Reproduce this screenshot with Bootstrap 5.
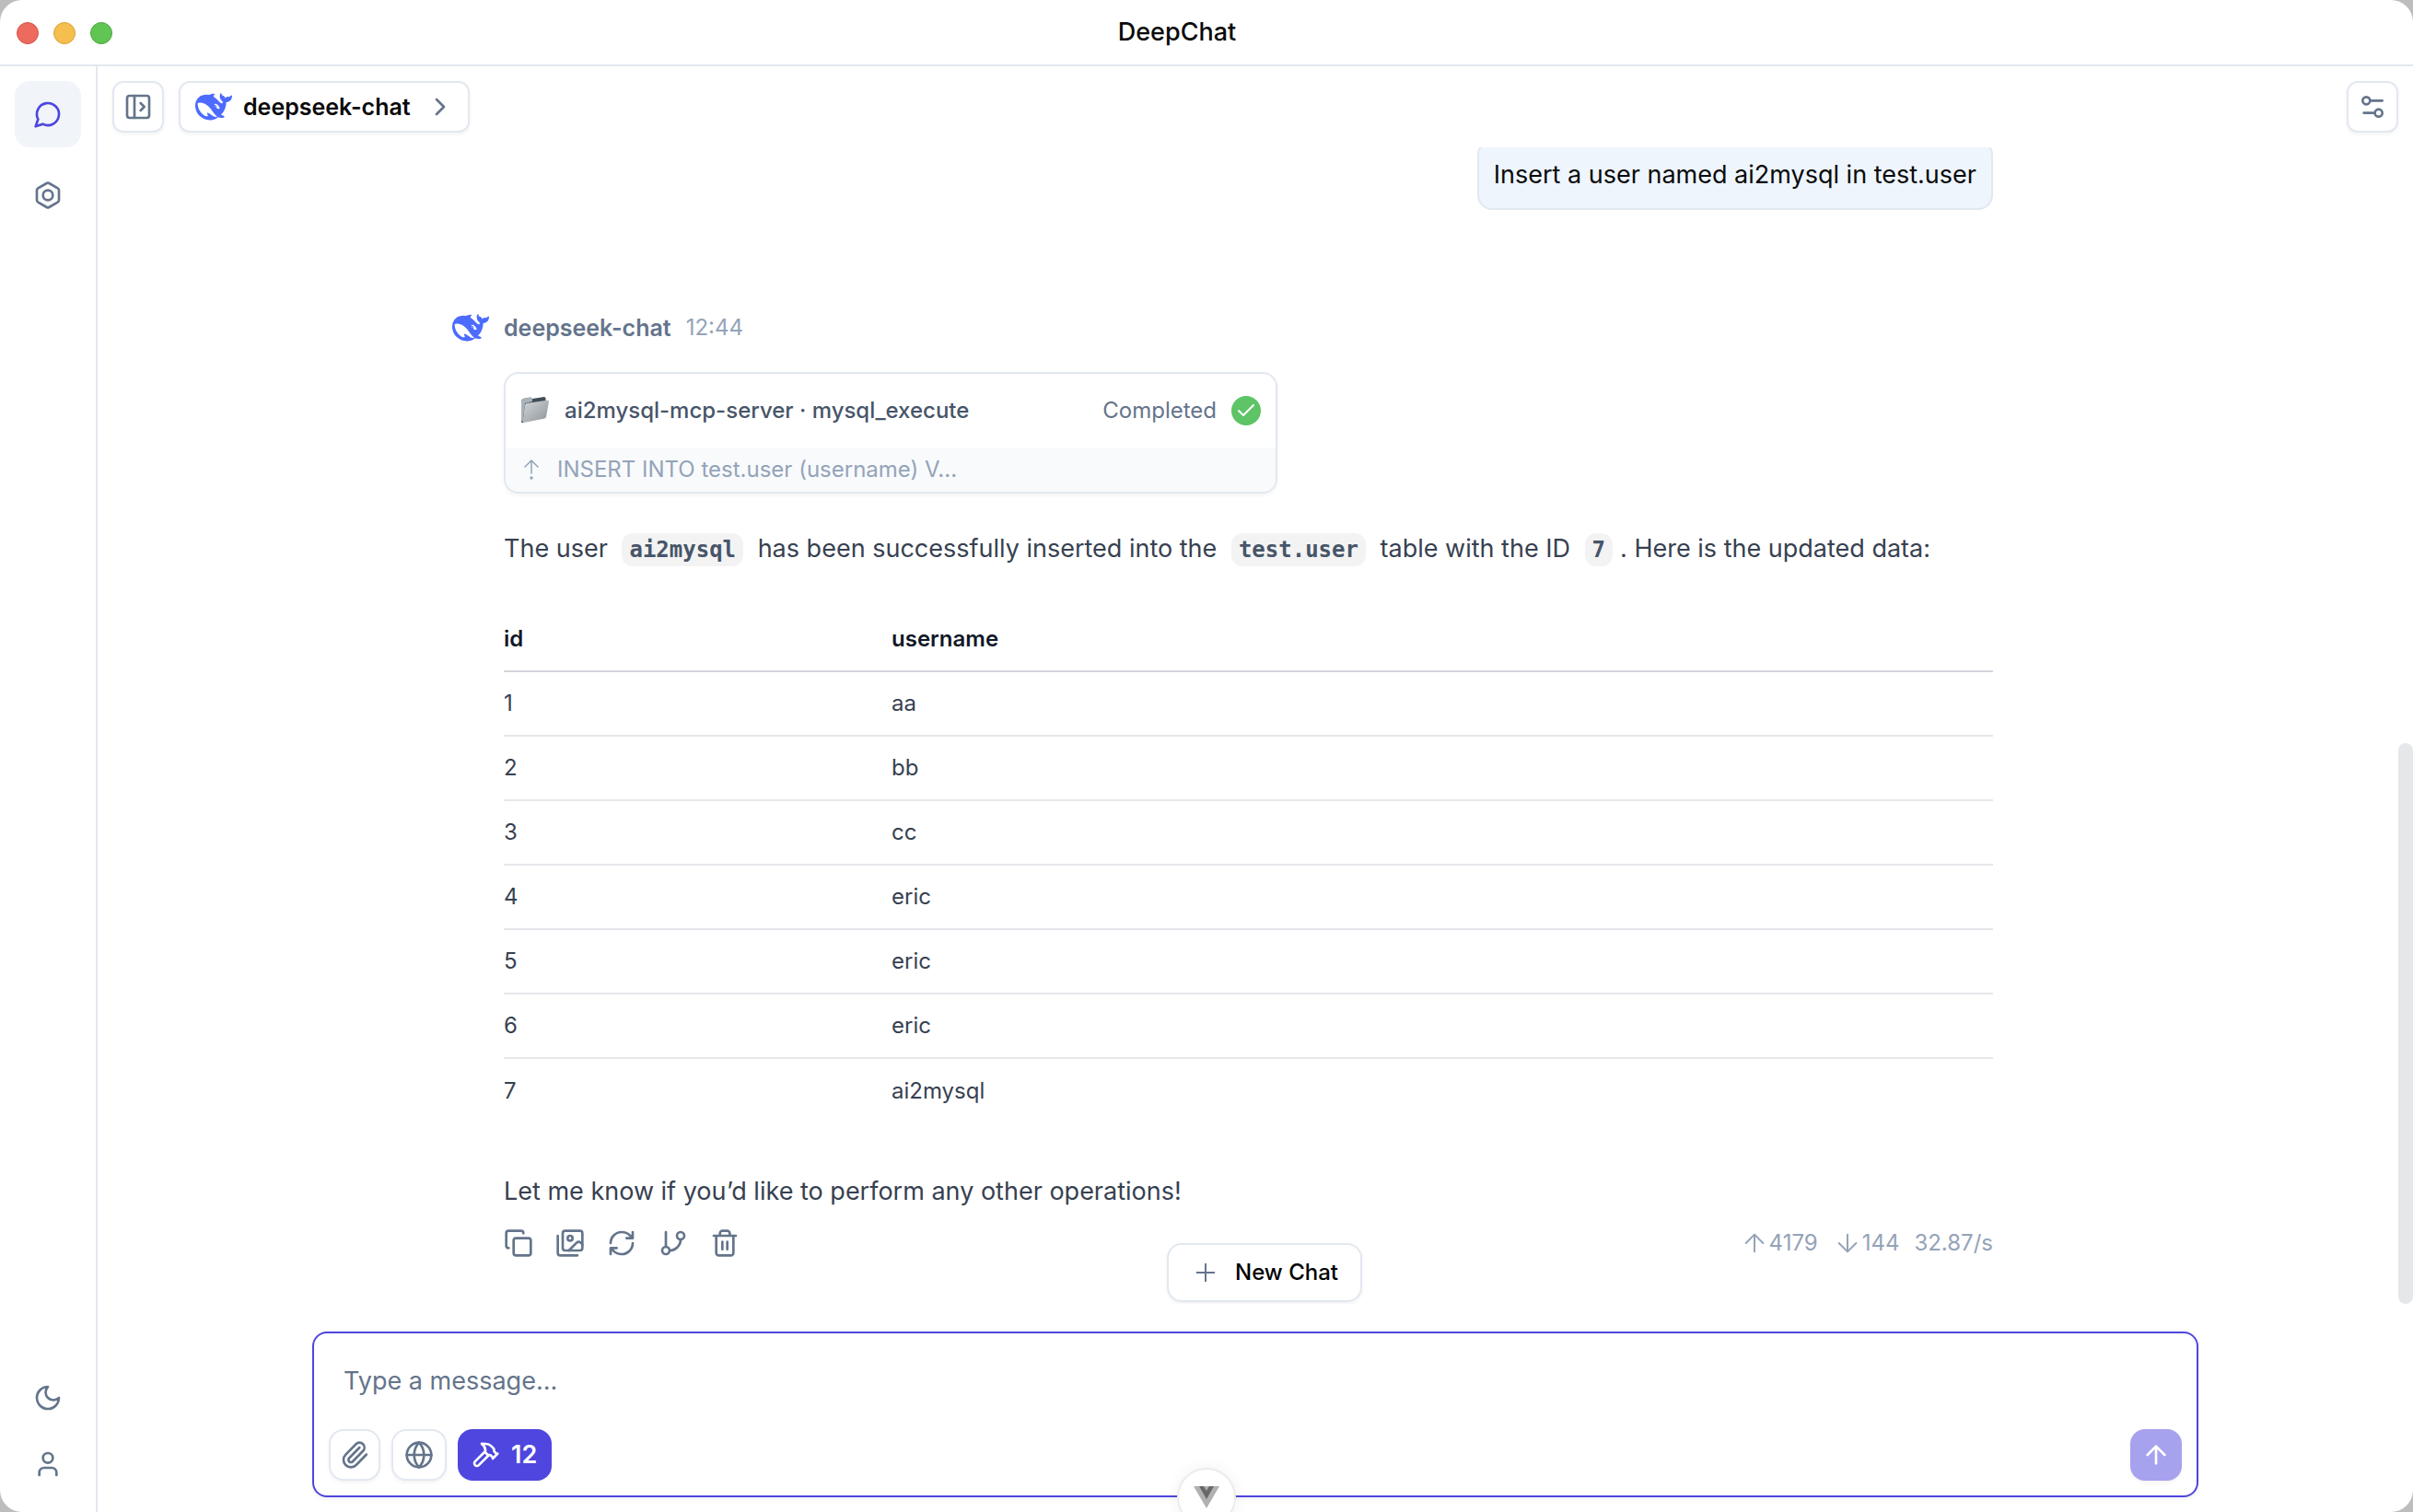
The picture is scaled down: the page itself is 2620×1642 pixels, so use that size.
<!DOCTYPE html>
<html lang="en">
<head>
<meta charset="utf-8">
<meta name="viewport" content="width=device-width, initial-scale=1">
<title>DeepChat</title>
<link href="https://cdn.jsdelivr.net/npm/bootstrap@5.3.0/dist/css/bootstrap.min.css" rel="stylesheet">
<style>
:root{--line:#e2e8f0;--muted:#64748b;--faint:#94a3b8;--accent:#4e46de;--prose:#374151}
html,body{height:100%}
body{background:#bdbdbd;font-family:Inter,"Liberation Sans",sans-serif;font-size:27px;line-height:40px;color:#0a0a0a;overflow:hidden}
button,textarea{font-family:inherit}
.window{height:100vh;border-radius:24px;background:#fff;overflow:hidden}
.titlebar{height:72px;border-bottom:2px solid var(--line);padding-right:64px}
.titlebar h1{font-size:27px;line-height:40px;font-weight:500}
.lights{left:18px;top:24px;gap:16px}
.light{width:24px;height:24px;border-radius:50%;border:1px solid}
.light.red{background:#ec6a5e;border-color:#d5544a}
.light.amber{background:#f4bf4f;border-color:#d8a03a}
.light.green{background:#61c554;border-color:#4aa63c}
.body-row,.feed{min-height:0}
.pane{min-width:0}
.rail{width:106px;border-right:2px solid var(--line);padding:16px}
.rail button{width:72px;height:72px;border:0;border-radius:16px;background:none;color:var(--muted)}
.rail button.current{background:#f1f5f9;color:var(--accent)}
svg.ico{width:32px;height:32px;flex:none;display:block;fill:none;stroke:currentColor;stroke-width:2;stroke-linecap:round;stroke-linejoin:round}
svg.ico.thin{stroke-width:1.5}
svg.ico.ico-sm{width:24px;height:24px}
svg.whale{width:40px;height:40px;flex:none;display:block;fill:#4d6bfe}
.boxed{height:56px;min-width:56px;padding:0;border:2px solid var(--line);border-radius:12px;background:#fff;color:var(--muted);box-shadow:0 2px 4px rgba(0,0,0,.05)}
.model{padding:0 14px 0 16px;font-size:25px;font-weight:600}
.model span{color:#0a0a0a}
.column-wide{width:100%;max-width:2048px}
.thread{padding:0 223px 46px 152px}
.bubble{border:2px solid var(--line);border-radius:16px;background:#eef5fd;padding:14px 16px;line-height:44px}
.reply-head{margin-top:108px;gap:16px}
.author{font-size:25px;font-weight:600;color:var(--muted)}
.clock{font-size:24px;color:var(--faint)}
.reply{padding-left:56px;color:var(--prose)}
.tool{width:840px;max-width:100%;margin-top:28px;border:2px solid var(--line);border-radius:16px;overflow:hidden;box-shadow:0 2px 4px rgba(0,0,0,.05);font-size:24px}
.tool-head{height:80px;padding:0 16px;color:#475569;font-weight:500}
.tool-head .state{color:var(--muted);font-weight:400}
.tool-call{height:48px;padding:0 16px;background:#f8fafc;color:var(--faint)}
.answer{margin:38px 0 0;line-height:44px}
.answer.closing{margin-top:53px}
.answer code{font-family:"DejaVu Sans Mono",monospace;font-size:24px;font-weight:700;color:#475569;background:#f3f3f3;border-radius:12px;padding:4px 8px;margin:0 8px}
.rows{margin:40px 0 0;font-size:24px;color:var(--prose);width:100%}
.rows th,.rows td{height:70px;padding:0;vertical-align:middle;line-height:40px;border-bottom:2px solid #e5e7eb}
.rows th{font-weight:600;color:#111827;border-bottom-color:#d1d5db}
.rows th:first-child{width:421px}
.rows tbody tr:last-child td{border-bottom:0}
.actions{margin-top:14px}
.tools{gap:24px}
.tools button{padding:0;border:0;background:none;color:var(--muted)}
.stats{font-size:24px;color:var(--faint);gap:16px}
.newchat{height:64px;border-radius:16px;padding:0 24px;gap:16px;font-size:24px;font-weight:500;margin-bottom:2px}
.floating{bottom:0;left:20px;right:0}
.thumb{right:0;bottom:0;width:16px;height:48.5%;border-radius:8px;background:#e5e7eb}
.composer{border:2px solid var(--accent);border-radius:16px;padding:16px;box-shadow:0 2px 4px rgba(0,0,0,.06)}
.composer textarea{height:88px;padding:16px;border:0;resize:none;outline:0;font-size:27px;line-height:40px;color:#0a0a0a}
.composer textarea::placeholder{color:var(--muted);opacity:1}
.composer .boxed,.hammer,.send{border-radius:16px}
.composer .globe{width:60px}
.hammer{height:56px;padding:0 16px 0 14px;gap:12px;border:0;background:var(--accent);color:#fff;font-size:27px;font-weight:600}
.send{width:56px;height:56px;border:0;padding:0;background:#a6a2ee;color:#fff;box-shadow:0 2px 4px rgba(0,0,0,.05)}
.foot{padding:30px 16px 16px}
.vue{left:50%;bottom:-16px;width:64px;height:64px;transform:translateX(-50%);border-radius:50%;border:2px solid #ececec;background:#fff;padding:0;box-shadow:0 0 16px rgba(0,0,0,.06)}
.vue svg{width:28px;height:24px}
</style>
<script src="https://cdn.jsdelivr.net/npm/bootstrap@5.3.0/dist/js/bootstrap.bundle.min.js"></script>
</head>
<body>
<svg width="0" height="0" class="position-absolute" aria-hidden="true">
  <symbol id="whale" viewBox="0 0 24 24"><path d="M23.748 4.482c-.254-.124-.364.113-.512.234-.051.039-.094.09-.137.136-.372.397-.806.657-1.373.626-.829-.046-1.537.214-2.163.848-.133-.782-.575-1.248-1.247-1.548-.352-.156-.708-.311-.955-.65-.172-.241-.219-.51-.305-.774-.055-.16-.11-.323-.293-.35-.2-.031-.278.136-.356.276-.313.572-.434 1.202-.422 1.84.027 1.436.633 2.58 1.838 3.393.137.093.172.187.129.323-.082.28-.18.552-.266.833-.055.179-.137.217-.329.14a5.526 5.526 0 01-1.736-1.18c-.857-.828-1.631-1.742-2.597-2.458a11.365 11.365 0 00-.689-.471c-.985-.957.13-1.743.388-1.836.27-.098.093-.432-.779-.428-.872.004-1.67.295-2.687.684a3.055 3.055 0 01-.465.137 9.597 9.597 0 00-2.883-.102c-1.885.21-3.39 1.102-4.497 2.623C.082 8.606-.231 10.684.152 12.85c.403 2.284 1.569 4.175 3.36 5.653 1.858 1.533 3.997 2.284 6.438 2.14 1.482-.085 3.133-.284 4.994-1.86.47.234.962.327 1.78.397.63.059 1.236-.03 1.705-.128.735-.156.684-.837.419-.961-2.155-1.004-1.682-.595-2.113-.926 1.096-1.296 2.746-2.642 3.392-7.003.05-.347.007-.565 0-.845-.004-.17.035-.237.23-.256a4.173 4.173 0 001.545-.475c1.396-.763 1.96-2.015 2.093-3.517.02-.23-.004-.467-.247-.588zM11.581 18c-2.089-1.642-3.102-2.183-3.52-2.16-.392.024-.321.471-.235.763.09.288.207.486.371.739.114.167.192.416-.113.603-.673.416-1.842-.14-1.897-.167-1.361-.802-2.5-1.86-3.301-3.307-.774-1.393-1.224-2.887-1.298-4.482-.02-.386.093-.522.477-.592a4.696 4.696 0 011.529-.039c2.132.312 3.946 1.265 5.468 2.774.868.86 1.525 1.887 2.202 2.891.72 1.066 1.494 2.082 2.48 2.914.348.292.625.514.891.677-.802.09-2.14.11-3.054-.614zm1-6.44a.306.306 0 01.415-.287.302.302 0 01.2.288.306.306 0 01-.31.307.303.303 0 01-.304-.308zm3.11 1.596c-.2.081-.399.151-.59.16a1.245 1.245 0 01-.798-.254c-.274-.23-.47-.358-.552-.758a1.73 1.73 0 01.016-.588c.07-.327-.008-.537-.239-.727-.187-.156-.426-.199-.688-.199a.559.559 0 01-.254-.078c-.11-.054-.2-.19-.114-.358.028-.054.16-.186.192-.21.356-.202.767-.136 1.146.016.352.144.618.408 1.001.782.391.451.462.576.685.914.176.265.336.537.445.848.067.195-.019.354-.25.452z"/></symbol>
</svg>
<div class="window d-flex flex-column position-relative">
  <header class="titlebar d-flex align-items-center justify-content-center position-relative flex-shrink-0">
    <div class="lights position-absolute d-flex"><span class="light red"></span><span class="light amber"></span><span class="light green"></span></div>
    <h1 class="m-0">DeepChat</h1>
  </header>
  <div class="body-row d-flex flex-grow-1">
    <nav class="rail d-flex flex-column flex-shrink-0" aria-label="Main">
      <button type="button" class="current d-flex align-items-center justify-content-center mb-3" aria-label="Chat"><svg class="ico" viewBox="0 0 24 24"><path d="M7.9 20A9 9 0 1 0 4 16.1L2 22Z"/></svg></button>
      <button type="button" class="d-flex align-items-center justify-content-center" aria-label="Settings"><svg class="ico" viewBox="0 0 24 24"><path d="M21 16V8a2 2 0 0 0-1-1.73l-7-4a2 2 0 0 0-2 0l-7 4A2 2 0 0 0 3 8v8a2 2 0 0 0 1 1.73l7 4a2 2 0 0 0 2 0l7-4A2 2 0 0 0 21 16z"/><circle cx="12" cy="12" r="4"/></svg></button>
      <button type="button" class="d-flex align-items-center justify-content-center mt-auto" aria-label="Dark mode"><svg class="ico" viewBox="0 0 24 24"><path d="M12 3a6 6 0 0 0 9 9 9 9 0 1 1-9-9Z"/></svg></button>
      <button type="button" class="d-flex align-items-center justify-content-center" aria-label="Account"><svg class="ico" viewBox="0 0 24 24"><path d="M19 21v-2a4 4 0 0 0-4-4H9a4 4 0 0 0-4 4v2"/><circle cx="12" cy="7" r="4"/></svg></button>
    </nav>
    <main class="pane d-flex flex-column flex-grow-1">
      <div class="d-flex gap-3 p-3">
        <button type="button" class="boxed d-flex align-items-center justify-content-center" aria-label="Open sidebar"><svg class="ico" viewBox="0 0 24 24"><rect width="18" height="18" x="3" y="3" rx="2"/><path d="M9 3v18M14 9l3 3-3 3"/></svg></button>
        <button type="button" class="boxed model d-flex align-items-center"><svg class="whale me-2"><use href="#whale"/></svg><span class="ms-1 me-3">deepseek-chat</span><svg class="ico" viewBox="0 0 24 24"><path d="m9 18 6-6-6-6"/></svg></button>
        <button type="button" class="boxed d-flex align-items-center justify-content-center ms-auto" aria-label="Chat settings"><svg class="ico" viewBox="0 0 24 24"><path d="M20 7h-9M14 17H5"/><circle cx="17" cy="17" r="3"/><circle cx="7" cy="7" r="3"/></svg></button>
      </div>
      <section class="feed flex-grow-1 position-relative d-flex flex-column justify-content-end align-items-center overflow-hidden">
        <div class="column-wide thread">
          <div class="d-flex justify-content-end"><div class="bubble">Insert a user named ai2mysql in test.user</div></div>
          <div class="reply-head d-flex align-items-center"><svg class="whale"><use href="#whale"/></svg><span class="author">deepseek-chat</span><span class="clock">12:44</span></div>
          <div class="reply">
            <div class="tool">
              <div class="tool-head d-flex align-items-center">
                <svg width="32" height="32" viewBox="0 0 32 32" class="flex-shrink-0 me-3" aria-hidden="true"><defs><linearGradient id="fg" x1="0" y1="0" x2="1" y2="1"><stop offset="0" stop-color="#d3d7da"/><stop offset="1" stop-color="#8d9398"/></linearGradient></defs><path d="M1 4.500 3 3l8-1.500 2 1.500 13-2 1.500 1v6L4 28l-2 1.500L1 28z" fill="#3f4d57"/><path d="M1 4.500 3 3l8-1.500 2 1.500v3L5 8 2.500 28 1 27z" fill="#a9b3b9"/><path d="M5 9.500 6.500 8 30 4.500 31 6l-3 17-1.500 1.500L3.500 29 2.500 28z" fill="url(#fg)"/></svg>
                <span>ai2mysql-mcp-server · mysql_execute</span>
                <span class="state ms-auto me-3">Completed</span>
                <svg class="flex-shrink-0" width="32" height="32" viewBox="0 0 32 32" aria-hidden="true"><circle cx="16" cy="16" r="16" fill="#5ec466"/><path d="m8 16 5 5L24 10" fill="none" stroke="#fff" stroke-width="2" stroke-linecap="round" stroke-linejoin="round"/></svg>
              </div>
              <div class="tool-call d-flex align-items-center"><svg class="ico thin ico-sm me-3" viewBox="0 0 24 24"><path d="m5 9 7-7 7 7M12 16V2"/><circle cx="12" cy="21" r="1"/></svg><span>INSERT INTO test.user (username) V...</span></div>
            </div>
            <p class="answer">The user <code>ai2mysql</code> has been successfully inserted into the <code>test.user</code> table with the ID <code>7</code>. Here is the updated data:</p>
            <table class="rows">
              <thead><tr><th scope="col">id</th><th scope="col">username</th></tr></thead>
              <tbody>
                <tr><td>1</td><td>aa</td></tr>
                <tr><td>2</td><td>bb</td></tr>
                <tr><td>3</td><td>cc</td></tr>
                <tr><td>4</td><td>eric</td></tr>
                <tr><td>5</td><td>eric</td></tr>
                <tr><td>6</td><td>eric</td></tr>
                <tr><td>7</td><td>ai2mysql</td></tr>
              </tbody>
            </table>
            <p class="answer closing">Let me know if you’d like to perform any other operations!</p>
            <div class="actions d-flex align-items-center justify-content-between">
              <div class="tools d-flex">
                <button type="button" aria-label="Copy"><svg class="ico" viewBox="0 0 24 24"><rect width="14" height="14" x="8" y="8" rx="2"/><path d="M4 16c-1.100 0-2-.9-2-2V4c0-1.100.9-2 2-2h10c1.100 0 2 .9 2 2"/></svg></button>
                <button type="button" aria-label="Save as image"><svg class="ico" viewBox="0 0 24 24"><path d="M18 22H4a2 2 0 0 1-2-2V6M22 13l-1.296-1.296a2.410 2.410 0 0 0-3.408 0L11 18"/><circle cx="12" cy="8" r="2"/><rect width="16" height="16" x="6" y="2" rx="2"/></svg></button>
                <button type="button" aria-label="Retry"><svg class="ico" viewBox="0 0 24 24"><path d="M3 12a9 9 0 0 1 9-9 9.750 9.750 0 0 1 6.740 2.740L21 8M21 3v5h-5M21 12a9 9 0 0 1-9 9 9.750 9.750 0 0 1-6.740-2.740L3 16M8 16H3v5"/></svg></button>
                <button type="button" aria-label="Fork"><svg class="ico" viewBox="0 0 24 24"><path d="M6 3v12M18 9a9 9 0 0 1-9 9"/><circle cx="18" cy="6" r="3"/><circle cx="6" cy="18" r="3"/></svg></button>
                <button type="button" aria-label="Delete"><svg class="ico" viewBox="0 0 24 24"><path d="M3 6h18M19 6v14c0 1-1 2-2 2H7c-1 0-2-1-2-2V6M8 6V4c0-1 1-2 2-2h4c1 0 2 1 2 2v2M10 11v6M14 11v6"/></svg></button>
              </div>
              <div class="stats d-flex">
                <span class="d-flex align-items-center"><svg class="ico thin" viewBox="0 0 24 24"><path d="m5 12 7-7 7 7M12 19V5"/></svg>4179</span>
                <span class="d-flex align-items-center"><svg class="ico thin" viewBox="0 0 24 24"><path d="M12 5v14M19 12l-7 7-7-7"/></svg>144</span>
                <span>32.87/s</span>
              </div>
            </div>
          </div>
        </div>
        <div class="floating position-absolute d-flex justify-content-center"><button type="button" class="boxed newchat d-flex align-items-center"><svg class="ico thin" viewBox="0 0 24 24"><path d="M5 12h14M12 5v14"/></svg><span class="text-black">New Chat</span></button></div>
        <div class="thumb position-absolute"></div>
      </section>
      <div class="foot d-flex justify-content-center">
        <form class="composer column-wide d-flex flex-column" onsubmit="return false">
          <textarea class="w-100" rows="1" aria-label="Message" placeholder="Type a message..."></textarea>
          <div class="d-flex align-items-center">
            <button type="button" class="boxed d-flex align-items-center justify-content-center me-2" aria-label="Attach file"><svg class="ico" viewBox="0 0 24 24"><path d="m16 6-8.414 8.586a2 2 0 0 0 2.829 2.829l8.414-8.586a4 4 0 1 0-5.657-5.657l-8.379 8.551a6 6 0 1 0 8.485 8.485l8.379-8.551"/></svg></button>
            <button type="button" class="boxed globe d-flex align-items-center justify-content-center ms-1 me-2" aria-label="Web search"><svg class="ico" viewBox="0 0 24 24"><circle cx="12" cy="12" r="10"/><path d="M12 2a14.500 14.500 0 0 0 0 20 14.500 14.500 0 0 0 0-20M2 12h20"/></svg></button>
            <button type="button" class="hammer d-flex align-items-center ms-1"><svg class="ico" viewBox="0 0 24 24"><path d="m15 12-8.373 8.373a1 1 0 1 1-3-3L12 9M18 15l4-4M21.500 11.500l-1.914-1.914A2 2 0 0 1 19 8.172V7l-2.260-2.260a6 6 0 0 0-4.202-1.756L9 2.960l.92.82A6.180 6.180 0 0 1 12 8.400V10l2 2h1.172a2 2 0 0 1 1.414.586L18.500 14.500"/></svg><span>12</span></button>
            <button type="submit" class="send d-flex align-items-center justify-content-center ms-auto" aria-label="Send"><svg class="ico" viewBox="0 0 24 24"><path d="m5 12 7-7 7 7M12 19V5"/></svg></button>
          </div>
        </form>
      </div>
    </main>
  </div>
  <button type="button" class="vue position-absolute d-flex align-items-center justify-content-center" aria-label="Developer tools"><svg viewBox="0 0 28 24"><path d="M0 0h28L14 24z" fill="#b0b0b0"/><path d="M6 0h5l3 5 3-5h5l-8 14z" fill="#686868"/></svg></button>
</div>
</body>
</html>
